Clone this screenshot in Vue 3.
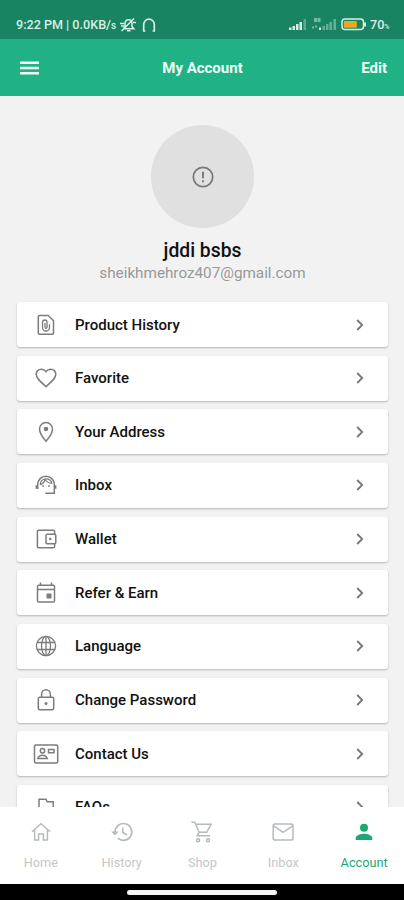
<script setup>
const rows = [
  { icon: 'file', label: 'Product History' },
  { icon: 'heart', label: 'Favorite' },
  { icon: 'pin', label: 'Your Address' },
  { icon: 'agent', label: 'Inbox' },
  { icon: 'wallet', label: 'Wallet' },
  { icon: 'calendar', label: 'Refer & Earn' },
  { icon: 'globe', label: 'Language' },
  { icon: 'lock', label: 'Change Password' },
  { icon: 'contact', label: 'Contact Us' },
  { icon: 'flag', label: 'FAQs' }
]
const tabs = [
  { icon: 'home', label: 'Home' },
  { icon: 'history', label: 'History' },
  { icon: 'cart', label: 'Shop' },
  { icon: 'mail', label: 'Inbox' },
  { icon: 'person', label: 'Account', active: true }
]
</script>

<template>
  <div class="screen">
    <div class="status">
      <span class="clock">9:22 PM | 0.0KB/<small>s</small></span>
      <svg class="mute" width="18" height="16" viewBox="0 0 18 16" fill="none" stroke="currentColor" stroke-width="1.500">
        <path d="M4.500 11.500 6 9.800V6.500C6 4 7.500 2.800 9.500 2.800c2 0 3.500 1.500 3.500 3.700v3.300l1.800 2H5M8 13.800h3.500M2.500 14 15 1.500M1 6.500h4M2 9h3M14 5.500h3" />
      </svg>
      <svg class="phones" width="16" height="16" viewBox="0 0 16 16" fill="none" stroke="currentColor" stroke-width="1.700">
        <path d="M4.400 14H2.700V7.500a5.300 5.300 0 0 1 10.600 0V14h-1.700" />
      </svg>
      <span class="gap"></span>
      <svg class="signal" width="19" height="13" viewBox="0 0 19 13" fill="currentColor">
        <path d="M1 9.500h2.500V12H1zM4.500 8H7v4H4.500zM8 6h2.500v6H8zM11.500 4H14v8h-2.500z" />
        <path d="M15.500 1H18v11h-2.500z" opacity=".35" />
      </svg>
      <svg class="signal second" width="26" height="13" viewBox="0 0 26 13" fill="currentColor">
        <path d="M3 0h3v4H3zM6.500 0h3v4h-3z" opacity=".5" />
        <path d="M1 8.500h2v2H1zM4 7.500h2v2H4z" opacity=".5" />
        <path d="M8 9.500h2V12H8z" />
        <path d="M11.500 8h2.500v4h-2.500zM15 6h2.500v6H15zM18.500 4H21v8h-2.500zM22.500 1H25v11h-2.500z" opacity=".4" />
      </svg>
      <svg class="battery" width="26" height="13" viewBox="0 0 26 13">
        <rect x="1" y="1" width="21.500" height="10.500" rx="3" fill="none" stroke="#d9eee4" stroke-width="1.500" />
        <rect x="2.800" y="2.900" width="13" height="6.800" rx="1" fill="#eba823" />
        <path d="M24 4.500v4" stroke="#d9eee4" stroke-width="2" />
      </svg>
      <span class="pct">70<small>%</small></span>
    </div>

    <header class="bar">
      <svg class="menu" width="20" height="14" viewBox="0 0 20 14"><path d="M0 1.700h19M0 7h19M0 12.300h19" stroke="#effff8" stroke-width="2.400" /></svg>
      <h1>My Account</h1>
      <span class="edit">Edit</span>
    </header>

    <main class="content">
      <section class="profile">
        <div class="avatar">
          <svg width="22" height="22" viewBox="0 0 22 22" fill="none" stroke="#777">
            <circle cx="11" cy="11" r="9.700" stroke-width="1.700" />
            <path d="M11 5.700v6.500M11 14.300v1.900" stroke-width="1.900" />
          </svg>
        </div>
        <div class="name">jddi bsbs</div>
        <div class="email">sheikhmehroz407@gmail.com</div>
      </section>

      <div class="list">
        <div v-for="row in rows" :key="row.label" class="card">
          <svg class="icon" width="26" height="24" viewBox="0 0 26 24" fill="none" stroke="currentColor" stroke-width="1.500">
            <template v-if="row.icon === 'file'">
              <path d="M6.500 2.500h8.700l5.300 5.300v12.200a1.200 1.200 0 0 1-1.200 1.200H6.500a1.200 1.200 0 0 1-1.200-1.200V3.700a1.200 1.200 0 0 1 1.200-1.200Z" />
              <path d="M9.500 10v4.500a3.500 3.500 0 0 0 7 0v-3.300M14 14.500V9.200a2.200 2.200 0 0 0-4.400 0v1M12 10v4.300c0 1.400 2 1.400 2 0" stroke-width="1.300" />
            </template>
            <path v-else-if="row.icon === 'heart'" d="m13 20.700-1.400-1.300C6.500 14.800 3.200 11.800 3.200 8.200A5 5 0 0 1 8.300 3.200c1.900 0 3.700.9 4.700 2.400a5.700 5.700 0 0 1 4.700-2.400 5 5 0 0 1 5.100 5c0 3.600-3.300 6.600-8.400 11.200L13 20.700Z" />
            <template v-else-if="row.icon === 'pin'">
              <path d="M13 2.600a6.500 6.500 0 0 0-6.500 6.500C6.500 14 13 21.300 13 21.300S19.500 14 19.500 9.100A6.500 6.500 0 0 0 13 2.600Z" />
              <circle cx="13" cy="9" r="2.300" fill="currentColor" stroke="none" />
            </template>
            <template v-else-if="row.icon === 'agent'">
              <path d="M4.700 16V11.500a8.300 8.300 0 0 1 16.600 0v8.700h-9" />
              <path d="M3.600 12.200v3.600M22.400 12.200v3.600" stroke-width="2" />
              <path d="M7.200 11.800c2.600-1 4.300-3 4.900-5.300 1.600 2.500 4 3.800 7 3.900M7.200 11.800c0-3 1.800-5.300 4.900-5.800 3.500-.3 6 1.500 7 4.400" stroke-width="1.200" />
              <path d="M9.300 13h1.700M15 13h1.700" stroke-width="1.700" />
            </template>
            <template v-else-if="row.icon === 'wallet'">
              <path d="M21.600 7V4.500a1.300 1.300 0 0 0-1.300-1.300H5.700a1.300 1.300 0 0 0-1.300 1.300v15a1.300 1.300 0 0 0 1.300 1.300h14.600a1.300 1.300 0 0 0 1.300-1.300V17" />
              <rect x="13" y="7.300" width="9.800" height="9.400" rx="1.200" />
              <circle cx="17.200" cy="12" r="1.200" fill="currentColor" stroke="none" />
            </template>
            <template v-else-if="row.icon === 'calendar'">
              <path d="M5.500 4.200h15a1 1 0 0 1 1 1V20a1 1 0 0 1-1 1h-15a1 1 0 0 1-1-1V5.200a1 1 0 0 1 1-1ZM4.500 8.500h17M7.500 1.500v3M18.500 1.500v3" />
              <path d="M13.500 12.500h5v5h-5z" fill="currentColor" stroke="none" />
            </template>
            <g v-else-if="row.icon === 'globe'" stroke-width="1.300">
              <circle cx="13" cy="12" r="9.600" />
              <ellipse cx="13" cy="12" rx="4.500" ry="9.600" />
              <path d="M4.200 8.500h17.600M4.200 15.500h17.600M13 2.500v19" />
            </g>
            <template v-else-if="row.icon === 'lock'">
              <rect x="5.300" y="9.300" width="15.400" height="12.500" rx="1.500" />
              <path d="M8.600 9V6.200a4.400 4.400 0 0 1 8.800 0V9" />
              <circle cx="13" cy="15.400" r="1.500" fill="currentColor" stroke="none" />
            </template>
            <template v-else-if="row.icon === 'contact'">
              <rect x="1.500" y="3" width="23.200" height="18" rx="1.500" />
              <circle cx="9.500" cy="8.800" r="2.200" />
              <path d="M4.800 16.500c.8-2.500 2.700-3.300 4.700-3.300s3.900.8 4.700 3.300ZM15.500 7.500h5.500v3.300h-5.500z" />
            </template>
            <path v-else d="M6 22V4.200h7l1.200 2.500h6v13h-6L13 17H6" />
          </svg>
          <span class="label">{{ row.label }}</span>
          <svg class="chevron" width="8" height="12" viewBox="0 0 8 12"><path d="m1.200 1 5 5-5 5" fill="none" stroke="#777" stroke-width="1.800" /></svg>
        </div>
      </div>
    </main>

    <nav class="tabs">
      <div v-for="tab in tabs" :key="tab.label" class="tab" :class="{ active: tab.active }">
        <svg width="24" height="24" viewBox="0 0 24 24" fill="none" stroke="currentColor" stroke-width="1.500">
          <path v-if="tab.icon === 'home'" d="M3 11.800 12 3.800l9 8M5.600 10v10h4v-6h4.800v6h4V10" />
          <template v-else-if="tab.icon === 'history'">
            <path d="M5 12a8.400 8.400 0 1 1 2.800 6.200" stroke-width="1.700" />
            <path d="M1.200 11.500h7.400L4.900 15.500z" fill="currentColor" stroke="none" />
            <path d="M12.800 7.500v5l4 2.500" />
          </template>
          <template v-else-if="tab.icon === 'cart'">
            <path d="M1.500 2.300h3.300l4.300 10h7.600l4.400-8H5.500M9.100 12.300l-2 3.500h13" />
            <circle cx="8" cy="20.300" r="1.500" />
            <circle cx="18" cy="20.300" r="1.500" />
          </template>
          <template v-else-if="tab.icon === 'mail'">
            <rect x="2.200" y="4" width="19.800" height="16" rx="1.800" />
            <path d="m2.500 5.800 9.600 6.500 9.600-6.500" />
          </template>
          <path v-else d="M12 11.800a4 4 0 1 0 0-8 4 4 0 0 0 0 8Zm0 2c-2.800 0-8.300 1.400-8.300 4.200v2h16.600v-2c0-2.800-5.500-4.200-8.300-4.200Z" fill="currentColor" stroke="none" />
        </svg>
        <span>{{ tab.label }}</span>
      </div>
    </nav>
    <div class="system"><div class="pill"></div></div>
  </div>
</template>

<style>
body {
  background: #f2f2f2;
}
</style>

<style scoped>
.screen {
  width: 404px;
  height: 900px;
  display: flex;
  flex-direction: column;
  overflow: hidden;
  background: #f2f2f2;
  font-family: Roboto, sans-serif;
  color: #111;
}
.status {
  height: 38.500px;
  flex: none;
  box-sizing: border-box;
  padding: 11px 13px 0 16px;
  display: flex;
  align-items: center;
  background: #198462;
  color: #d9eee4;
  font-size: 12.600px;
  font-weight: 500;
  white-space: nowrap;
}
.status small {
  font-size: 10px;
}
.mute {
  margin-left: 3px;
}
.phones {
  margin-left: 4px;
}
.gap {
  flex: 1;
}
.second {
  margin-left: 4px;
}
.battery {
  margin-left: 4px;
}
.pct {
  margin-left: 3px;
  width: 21px;
}
.pct small {
  font-size: 7px;
}
.bar {
  height: 57.500px;
  flex: none;
  box-sizing: border-box;
  padding: 1px 17px 0 20px;
  display: grid;
  grid-template-columns: 60px 1fr 60px;
  align-items: center;
  background: #20b184;
  color: #effff8;
}
.bar h1 {
  margin: 0 2px 0 0;
  font-size: 15px;
  font-weight: 700;
  text-align: center;
}
.edit {
  text-align: right;
  font-size: 15px;
  font-weight: 700;
}
.content {
  flex: 1;
  min-height: 0;
  overflow: hidden;
  padding: 29px 16px 0 17px;
}
.profile {
  display: flex;
  flex-direction: column;
  align-items: center;
  height: 177px;
}
.avatar {
  width: 103px;
  height: 103px;
  flex: none;
  border-radius: 50%;
  background: #e0e0e0;
  display: flex;
  align-items: center;
  justify-content: center;
}
.name {
  margin-top: 11px;
  line-height: 24px;
  font-size: 19.300px;
  font-weight: 500;
}
.email {
  line-height: 20px;
  font-size: 15.250px;
  color: #999;
}
.list {
  display: flex;
  flex-direction: column;
  gap: 8.670px;
}
.card {
  height: 45px;
  flex: none;
  box-sizing: border-box;
  display: flex;
  align-items: center;
  padding: 0 24px 0 16px;
  border-radius: 3px;
  background: #fff;
  box-shadow: 0 1px 2px rgba(0, 0, 0, 0.25);
}
.icon {
  color: #7c7c7c;
}
.label {
  flex: 1;
  margin-left: 16px;
  font-size: 15px;
  font-weight: 500;
}
.tabs {
  height: 77px;
  flex: none;
  box-sizing: border-box;
  padding: 13px 0 0;
  display: grid;
  grid-template-columns: repeat(5, 1fr);
  background: #fff;
}
.tab {
  display: flex;
  flex-direction: column;
  align-items: center;
  gap: 11px;
  padding-left: 1px;
  color: #b4babd;
  font-size: 12.700px;
  line-height: 16px;
}
.tab span {
  color: #c6c6c6;
}
.tab.active,
.tab.active span {
  color: #1ca873;
}
.system {
  height: 16px;
  flex: none;
  box-sizing: border-box;
  padding-top: 6px;
  display: flex;
  justify-content: center;
  background: #000;
}
.pill {
  width: 150px;
  height: 4.500px;
  border-radius: 3px;
  background: #f4f4f4;
}
</style>
